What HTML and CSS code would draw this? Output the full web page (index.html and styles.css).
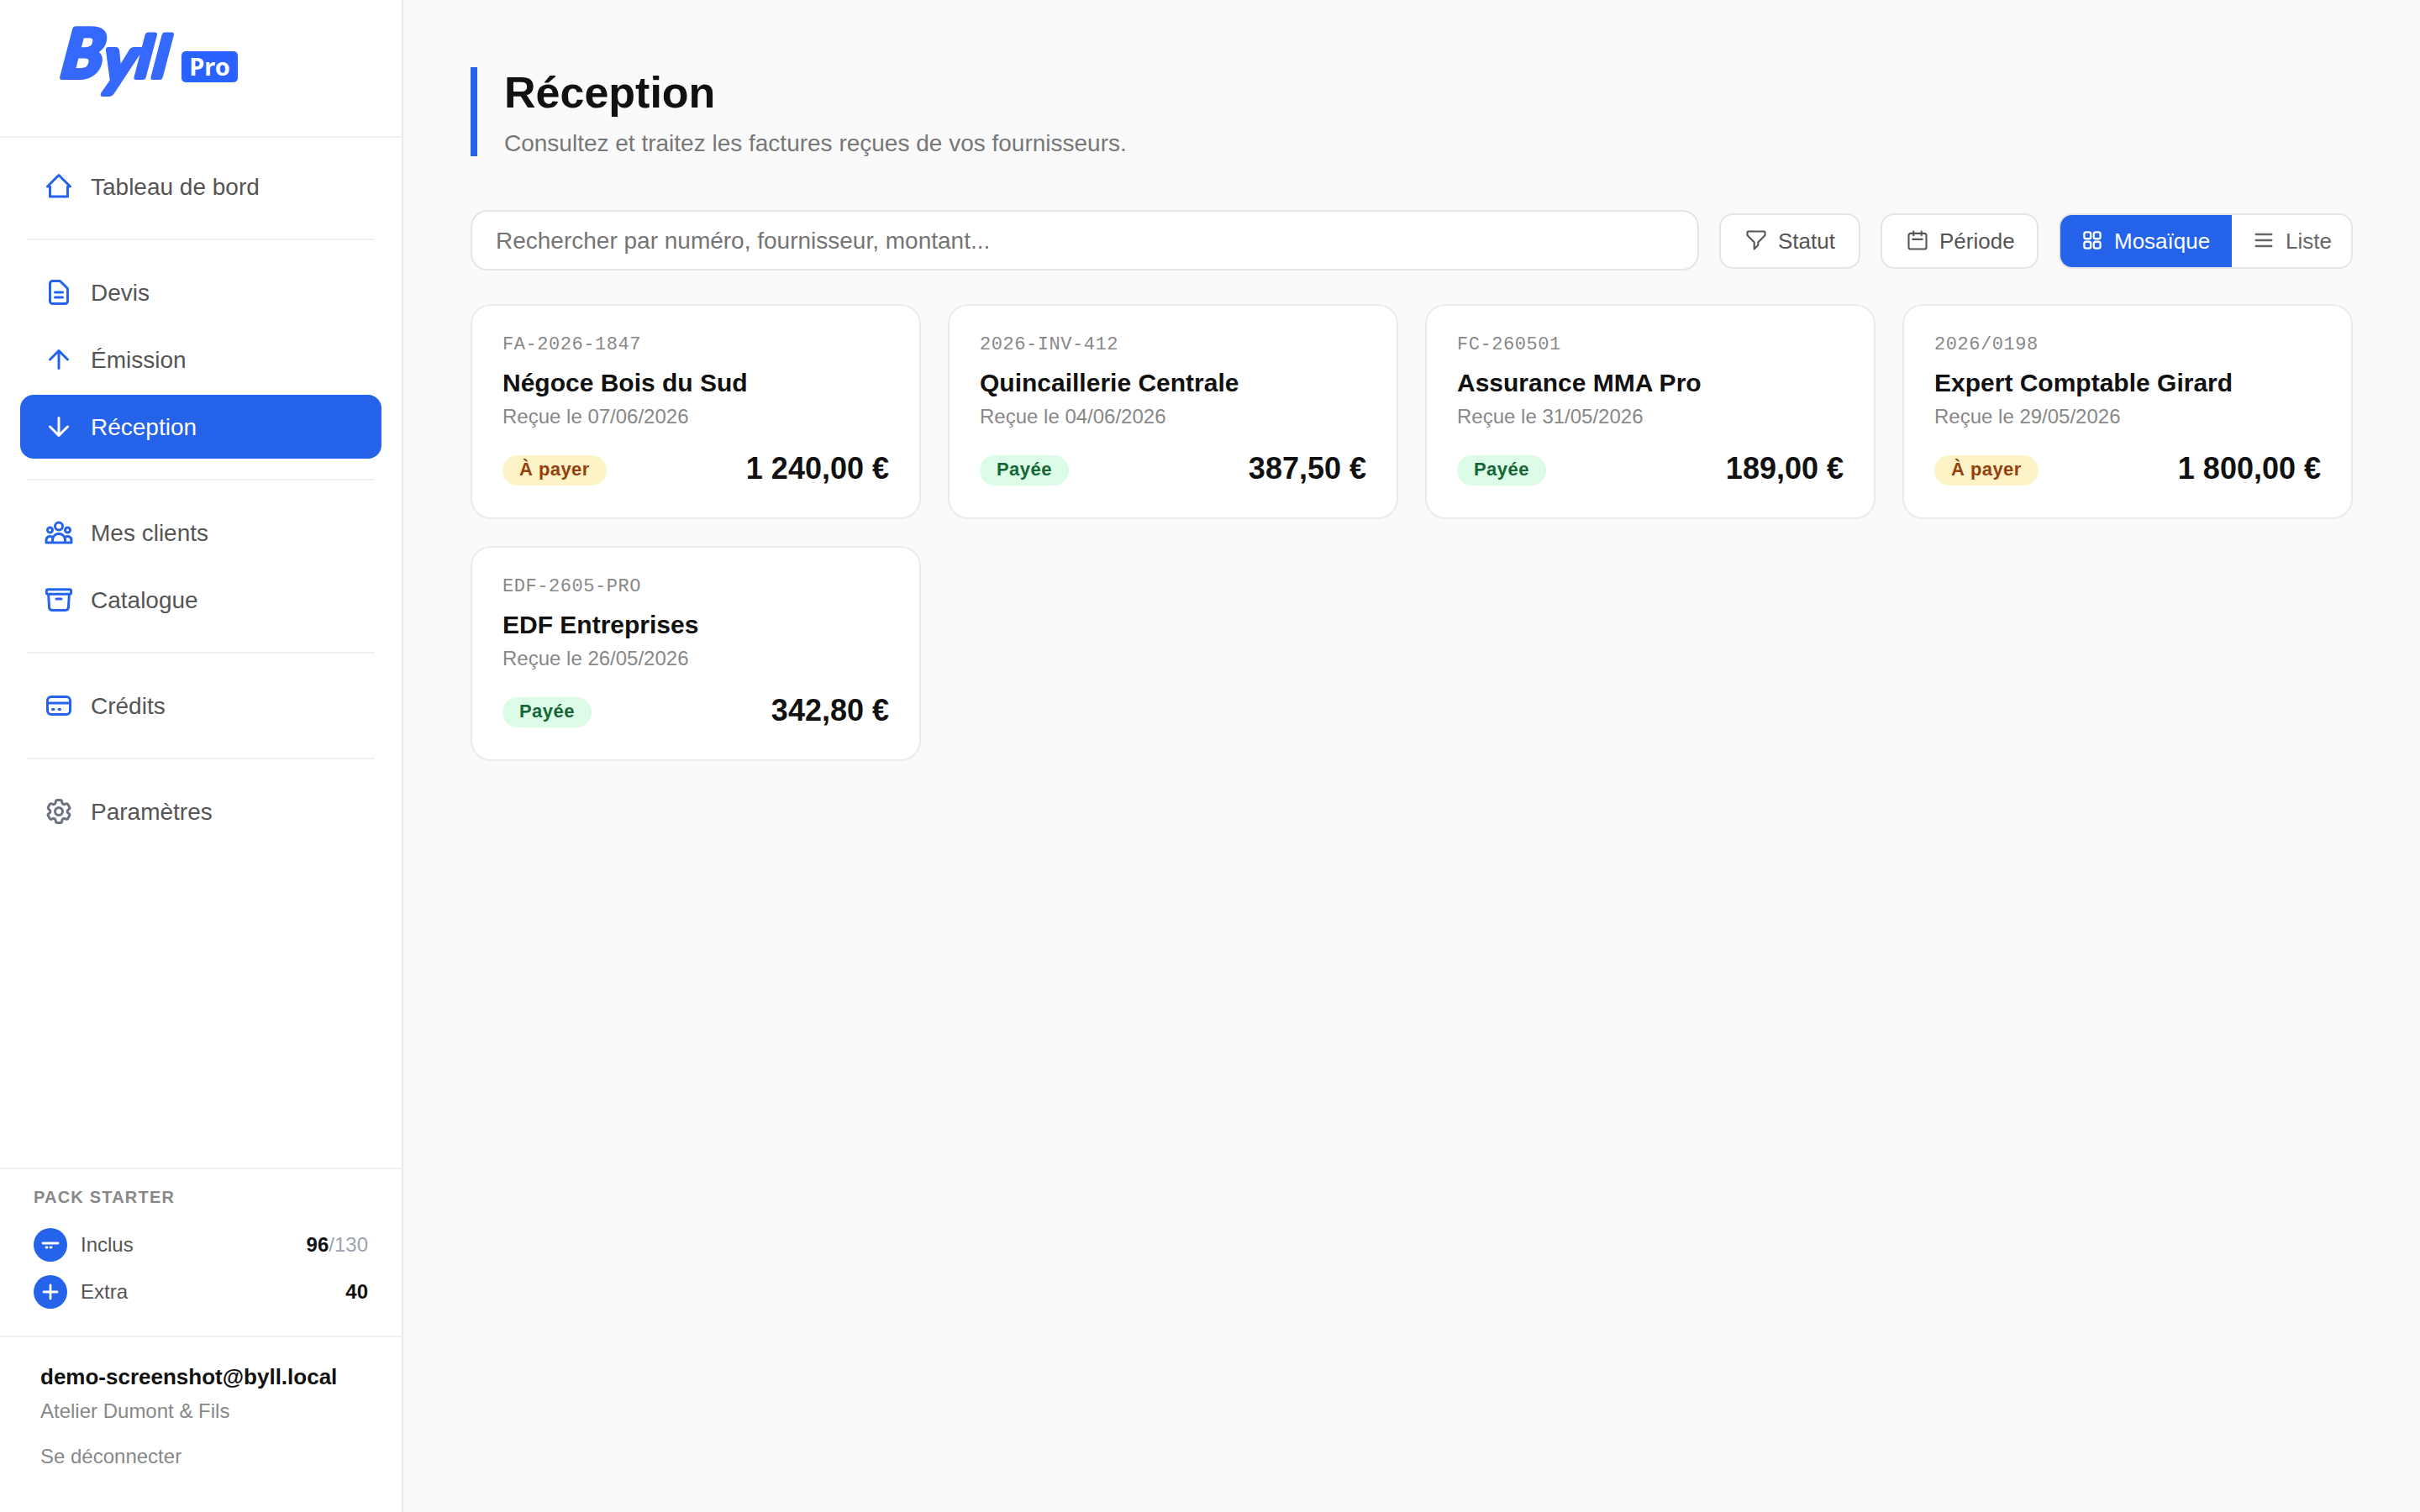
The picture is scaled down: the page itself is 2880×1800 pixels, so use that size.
FILE: index.html
```
<!DOCTYPE html>
<html lang="fr">
<head>
    <meta charset="UTF-8">
    <meta name="viewport" content="width=device-width, initial-scale=1.0">
    <title>Réception - Byll Pro</title>
    <link rel="stylesheet" href="styles.css">
</head>
<body>
    <aside class="sidebar">
        <div class="sidebar-header">
            <svg class="logo" viewBox="40 0 168 136">
                <text class="logo-text" y="92" transform="translate(13 0) skewX(-8)"><tspan x="71" class="logo-cap">B</tspan><tspan x="122" y="99" class="logo-tail">y</tspan><tspan x="161" y="92">l</tspan><tspan x="181">l</tspan></text>
            </svg>
            <span class="logo-badge">Pro</span>
        </div>

        <nav class="nav">
            <a href="#" class="nav-item">
                <svg class="icon" viewBox="0 0 24 24"><path d="M5 12H3l9-9 9 9h-2v8H5z"/></svg>
                Tableau de bord
            </a>
            <div class="divider"></div>
            <a href="#" class="nav-item">
                <svg class="icon" viewBox="0 0 24 24"><path d="M9 12h6m-6 4h6m2 5H7a2 2 0 01-2-2V5a2 2 0 012-2h5.586a1 1 0 01.707.293l5.414 5.414a1 1 0 01.293.707V19a2 2 0 01-2 2z"/></svg>
                Devis
            </a>
            <a href="#" class="nav-item">
                <svg class="icon" viewBox="0 0 24 24"><path d="M12 19V5M5 12l7-7 7 7"/></svg>
                Émission
            </a>
            <a href="#" class="nav-item active">
                <svg class="icon" viewBox="0 0 24 24"><path d="M12 5v14M19 12l-7 7-7-7"/></svg>
                Réception
            </a>
            <div class="divider"></div>
            <a href="#" class="nav-item">
                <svg class="icon" viewBox="0 0 24 24"><path d="M17 20h5v-2a3 3 0 00-5.356-1.857M17 20H7m10 0v-2c0-.656-.126-1.283-.356-1.857M7 20H2v-2a3 3 0 015.356-1.857M7 20v-2c0-.656.126-1.283.356-1.857m0 0a5.002 5.002 0 019.288 0M15 7a3 3 0 11-6 0 3 3 0 016 0zm6 3a2 2 0 11-4 0 2 2 0 014 0zM7 10a2 2 0 11-4 0 2 2 0 014 0z"/></svg>
                Mes clients
            </a>
            <a href="#" class="nav-item">
                <svg class="icon" viewBox="0 0 24 24"><path d="m20.25 7.5-.625 10.632a2.25 2.25 0 0 1-2.247 2.118H6.622a2.25 2.25 0 0 1-2.247-2.118L3.75 7.5M10 11.25h4M3.375 7.5h17.25c.621 0 1.125-.504 1.125-1.125v-1.5c0-.621-.504-1.125-1.125-1.125H3.375c-.621 0-1.125.504-1.125 1.125v1.5c0 .621.504 1.125 1.125 1.125Z"/></svg>
                Catalogue
            </a>
            <div class="divider"></div>
            <a href="#" class="nav-item">
                <svg class="icon" viewBox="0 0 24 24"><path d="M3 10h18M7 15h1m4 0h1m-7 4h12a3 3 0 003-3V8a3 3 0 00-3-3H6a3 3 0 00-3 3v8a3 3 0 003 3z"/></svg>
                Crédits
            </a>
            <div class="divider"></div>
            <a href="#" class="nav-item">
                <svg class="icon icon-gray" viewBox="0 0 24 24"><path d="M9.594 3.94c.09-.542.56-.94 1.11-.94h2.593c.55 0 1.02.398 1.11.94l.213 1.281c.063.374.313.686.645.87.074.04.147.083.22.127.325.196.72.257 1.075.124l1.217-.456a1.125 1.125 0 0 1 1.37.49l1.296 2.247a1.125 1.125 0 0 1-.26 1.431l-1.003.827c-.293.241-.438.613-.43.992a7.723 7.723 0 0 1 0 .255c-.008.378.137.75.43.991l1.004.827c.424.35.534.955.26 1.43l-1.298 2.247a1.125 1.125 0 0 1-1.369.491l-1.217-.456c-.355-.133-.75-.072-1.076.124a6.47 6.47 0 0 1-.22.128c-.331.183-.581.495-.644.869l-.213 1.281c-.09.543-.56.94-1.11.94h-2.594c-.55 0-1.019-.398-1.11-.94l-.213-1.281c-.062-.374-.312-.686-.644-.87a6.52 6.52 0 0 1-.22-.127c-.325-.196-.72-.257-1.076-.124l-1.217.456a1.125 1.125 0 0 1-1.369-.49l-1.297-2.247a1.125 1.125 0 0 1 .26-1.431l1.004-.827c.292-.24.437-.613.43-.991a6.932 6.932 0 0 1 0-.255c.007-.38-.138-.751-.43-.992l-1.004-.827a1.125 1.125 0 0 1-.26-1.43l1.297-2.247a1.125 1.125 0 0 1 1.37-.491l1.216.456c.356.133.751.072 1.076-.124.072-.044.146-.086.22-.128.332-.183.582-.495.644-.869l.214-1.28Z"/><path d="M15 12a3 3 0 1 1-6 0 3 3 0 0 1 6 0Z"/></svg>
                Paramètres
            </a>
        </nav>

        <!-- Credits left in the pack -->
        <div class="pack">
            <div class="pack-title">PACK STARTER</div>
            <div class="pack-row">
                <span class="pack-icon"><svg viewBox="0 0 24 24"><path d="M3 10h18M7 15h1m4 0h1"/></svg></span>
                <span>Inclus</span>
                <span class="pack-value">96<span class="pack-total">/130</span></span>
            </div>
            <div class="pack-row">
                <span class="pack-icon"><svg viewBox="0 0 24 24"><path d="M12 4v16M4 12h16"/></svg></span>
                <span>Extra</span>
                <span class="pack-value">40</span>
            </div>
        </div>

        <div class="user">
            <div class="user-email">demo-screenshot@byll.local</div>
            <div class="user-company">Atelier Dumont &amp; Fils</div>
            <a href="#" class="logout">Se déconnecter</a>
        </div>
    </aside>

    <main class="main">
        <header class="page-header">
            <h1>Réception</h1>
            <p>Consultez et traitez les factures reçues de vos fournisseurs.</p>
        </header>

        <div class="toolbar">
            <input type="text" class="search" placeholder="Rechercher par numéro, fournisseur, montant...">
            <button class="filter-button status">
                <svg class="small-icon" viewBox="0 0 24 24"><path d="M3 4a1 1 0 011-1h16a1 1 0 011 1v2.586a1 1 0 01-.293.707l-6.414 6.414a1 1 0 00-.293.707V17l-4 4v-6.586a1 1 0 00-.293-.707L3.293 7.293A1 1 0 013 6.586V4z"/></svg>
                Statut
            </button>
            <button class="filter-button period">
                <svg class="small-icon" viewBox="0 0 24 24"><path d="M8 7V3m8 4V3m-9 8h10M5 21h14a2 2 0 002-2V7a2 2 0 00-2-2H5a2 2 0 00-2 2v12a2 2 0 002 2z"/></svg>
                Période
            </button>
            <div class="view-toggle">
                <button class="view-button selected">
                    <svg class="small-icon bold" viewBox="0 0 24 24"><rect x="3.75" y="3.75" width="6.75" height="6.75" rx="2"/><rect x="13.5" y="3.75" width="6.75" height="6.75" rx="2"/><rect x="3.75" y="13.5" width="6.75" height="6.75" rx="2"/><rect x="13.5" y="13.5" width="6.75" height="6.75" rx="2"/></svg>
                    Mosaïque
                </button>
                <button class="view-button">
                    <svg class="small-icon bold" viewBox="0 0 24 24"><path d="M4 6h16M4 12h16M4 18h16"/></svg>
                    Liste
                </button>
            </div>
        </div>

        <div class="cards">
            <article class="card">
                <div class="card-number">FA-2026-1847</div>
                <div class="card-name">Négoce Bois du Sud</div>
                <div class="card-date">Reçue le 07/06/2026</div>
                <div class="card-footer">
                    <span class="badge due">À payer</span>
                    <span class="amount">1 240,00 €</span>
                </div>
            </article>
            <article class="card">
                <div class="card-number">2026-INV-412</div>
                <div class="card-name">Quincaillerie Centrale</div>
                <div class="card-date">Reçue le 04/06/2026</div>
                <div class="card-footer">
                    <span class="badge paid">Payée</span>
                    <span class="amount">387,50 €</span>
                </div>
            </article>
            <article class="card">
                <div class="card-number">FC-260501</div>
                <div class="card-name">Assurance MMA Pro</div>
                <div class="card-date">Reçue le 31/05/2026</div>
                <div class="card-footer">
                    <span class="badge paid">Payée</span>
                    <span class="amount">189,00 €</span>
                </div>
            </article>
            <article class="card">
                <div class="card-number">2026/0198</div>
                <div class="card-name">Expert Comptable Girard</div>
                <div class="card-date">Reçue le 29/05/2026</div>
                <div class="card-footer">
                    <span class="badge due">À payer</span>
                    <span class="amount">1 800,00 €</span>
                </div>
            </article>
            <article class="card">
                <div class="card-number">EDF-2605-PRO</div>
                <div class="card-name">EDF Entreprises</div>
                <div class="card-date">Reçue le 26/05/2026</div>
                <div class="card-footer">
                    <span class="badge paid">Payée</span>
                    <span class="amount">342,80 €</span>
                </div>
            </article>
        </div>
    </main>
</body>
</html>
```
FILE: styles.css
```
* {
    box-sizing: border-box;
}
body {
    margin: 0;
    display: flex;
    min-height: 100vh;
    font-family: "Liberation Sans", Arial, sans-serif;
    background-color: #fafafa;
    color: #111;
}
a {
    text-decoration: none;
}
svg {
    display: block;
    flex-shrink: 0;
    fill: none;
    stroke: currentColor;
    stroke-linecap: round;
    stroke-linejoin: round;
}

/* Sidebar */
.sidebar {
    width: 480px;
    height: 100vh;
    flex-shrink: 0;
    display: flex;
    flex-direction: column;
    background-color: #fff;
    border-right: 2px solid #ebebeb;
}
.sidebar-header {
    display: flex;
    align-items: flex-start;
    height: 164px;
    padding-left: 40px;
    border-bottom: 2px solid #f0f0f0;
}
.logo {
    width: 168px;
    height: 136px;
    overflow: visible;
}
.logo-text {
    font-family: Lato, sans-serif;
    font-style: italic;
    font-weight: 700;
    font-size: 68px;
    fill: #3569fd;
    stroke: #3569fd;
    stroke-width: 6px;
}
.logo-cap {
    font-size: 80px;
}
.logo-tail {
    font-size: 78px;
}
.logo-badge {
    width: 67px;
    height: 37px;
    margin: 61px 0 0 8px;
    border-radius: 5px;
    background-color: #2962ff;
    color: #fff;
    font-family: "Noto Sans", sans-serif;
    font-weight: 700;
    font-size: 29px;
    line-height: 35px;
    text-align: center;
}
.nav {
    flex: 1;
    display: flex;
    flex-direction: column;
    gap: 4px;
    padding: 20px 24px;
}
.nav-item {
    display: flex;
    align-items: center;
    gap: 20px;
    height: 76px;
    padding: 2px 28px 0;
    border-radius: 16px;
    font-size: 28px;
    color: #555;
}
.nav-item.active {
    background-color: #2563eb;
    color: #fff;
}
.icon {
    width: 36px;
    height: 36px;
    margin-top: -2px;
    stroke-width: 2;
    color: #2563eb;
}
.icon-gray {
    color: #6b7280;
}
.active .icon {
    color: #fff;
}
.divider {
    height: 2px;
    margin: 20px 8px;
    background-color: #f0f0f0;
}

/* Pack */
.pack {
    border-top: 2px solid #f0f0f0;
    padding: 21px 40px 32px;
    display: flex;
    flex-direction: column;
    gap: 16px;
    font-size: 24px;
    color: #555;
}
.pack-title {
    margin-bottom: 9px;
    font-size: 20px;
    line-height: 24px;
    font-weight: 700;
    letter-spacing: 1.2px;
    color: #888;
}
.pack-row {
    display: flex;
    align-items: center;
    gap: 16px;
}
.pack-icon {
    display: flex;
    align-items: center;
    justify-content: center;
    width: 40px;
    height: 40px;
    border-radius: 50%;
    background-color: #2563eb;
    color: #fff;
}
.pack-icon svg {
    width: 24px;
    height: 24px;
    stroke-width: 2.8;
}
.pack-value {
    margin-left: auto;
    font-weight: 700;
    color: #111;
}
.pack-total {
    font-weight: 400;
    color: #9ca3af;
}

/* User */
.user {
    border-top: 2px solid #f0f0f0;
    padding: 32px 48px 52px;
    font-size: 24px;
    line-height: 28px;
    color: #888;
}
.user-email {
    font-size: 26px;
    line-height: 30px;
    font-weight: 700;
    color: #111;
}
.user-company {
    margin: 12px 0 26px;
}
.logout {
    display: block;
    color: #888;
}

/* Main content */
.main {
    flex: 1;
    padding: 80px;
}
.page-header {
    border-left: 8px solid #2563eb;
    padding-left: 32px;
}
.page-header h1 {
    margin: 0 0 15px;
    font-size: 52px;
    line-height: 60px;
}
.page-header p {
    margin: 0;
    height: 31px;
    font-size: 28px;
    line-height: 32px;
    color: #777;
}
.toolbar {
    display: flex;
    align-items: center;
    gap: 24px;
    margin: 64px 0 40px;
}
.search {
    flex: 1;
    height: 72px;
    padding: 2px 28px 0;
    border: 2px solid #e5e5e5;
    border-radius: 20px;
    background-color: #fff;
    font-family: inherit;
    font-size: 28px;
}
.search::placeholder {
    color: #757575;
}
.filter-button,
.view-button {
    display: flex;
    align-items: center;
    gap: 12px;
    font-family: inherit;
    font-size: 26px;
    color: #555;
    background-color: #fff;
    cursor: pointer;
    white-space: nowrap;
}
.filter-button {
    height: 66px;
    margin-top: 2px;
    padding: 0 0 0 28px;
    border: 2px solid #e5e5e5;
    border-radius: 16px;
}
.status {
    width: 168px;
}
.period {
    width: 188px;
}
.view-toggle {
    display: flex;
    width: 350px;
    height: 66px;
    margin-top: 2px;
    border: 2px solid #e5e5e5;
    border-radius: 16px;
    overflow: hidden;
}
.view-button {
    flex: 1;
    padding: 0 0 0 24px;
    border: none;
    color: #666;
}
.view-button.selected {
    flex: 0 0 204px;
    background-color: #2563eb;
    color: #fff;
}
.small-icon {
    width: 28px;
    height: 28px;
    margin-top: -2px;
    stroke-width: 1.8;
}
.small-icon.bold {
    stroke-width: 2;
}

/* Invoice cards */
.cards {
    display: grid;
    grid-template-columns: repeat(4, 1fr);
    gap: 32px;
}
.card {
    height: 256px;
    padding: 35px 36px 38px;
    border: 2px solid #ebebeb;
    border-radius: 24px;
    background-color: #fff;
    display: flex;
    flex-direction: column;
}
.card-number {
    font-family: "Liberation Mono", monospace;
    font-size: 22px;
    line-height: 24px;
    letter-spacing: 0.55px;
    color: #888;
}
.card-name {
    margin: 16px 0 9px;
    font-size: 30px;
    line-height: 34px;
    font-weight: 700;
}
.card-date {
    font-size: 24px;
    line-height: 28px;
    color: #888;
}
.card-footer {
    display: flex;
    justify-content: space-between;
    align-items: flex-end;
    margin-top: auto;
}
.badge {
    padding: 0 20px 2px;
    border-radius: 18px;
    font-size: 22px;
    line-height: 34px;
    font-weight: 700;
    letter-spacing: 0.44px;
}
.badge.due {
    background-color: #fef3c7;
    color: #92400e;
}
.badge.paid {
    background-color: #dcfce7;
    color: #166534;
}
.amount {
    font-size: 36px;
    line-height: 41px;
    font-weight: 700;
}
```
